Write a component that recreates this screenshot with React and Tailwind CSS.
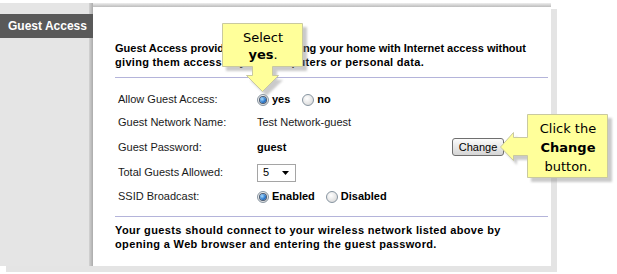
import React from 'react'

function Radio({ checked }) {
    return (
        <span className="flex h-[12px] w-[12px] shrink-0 items-center justify-center rounded-full border border-[#8795a1] bg-[radial-gradient(circle_at_40%_35%,#ffffff,#d2d2d2)]">
            {checked && (
                <span className="h-[6px] w-[6px] rounded-full bg-[radial-gradient(circle_at_35%_35%,#a8dcff,#1d6cc4_65%,#0b3a7c)] ring-1 ring-[#4a5a70]" />
            )}
        </span>
    )
}

function Row({ label, height, children }) {
    return (
        <div className={`flex items-center pl-[3px] ${height}`}>
            <span className="w-[139px] shrink-0">{label}</span>
            {children}
        </div>
    )
}

export default function App() {
    return (
        <div className="relative h-[274px] w-[617px] overflow-hidden bg-white font-['Liberation_Sans',Arial,sans-serif] text-[11px] text-[#1a1a1a]">
            <div className="mt-[3px] flex h-[263px] w-[551px] shadow-[6px_6px_0_0_#e4e4e4]">
                {/* sidebar */}
                <div className="w-[93px] shrink-0 bg-[linear-gradient(to_right,#e5e5e5_89px,#d3d3d3_89px,#ababab_93px)] pt-[11px]">
                    <div className="flex h-[24px] items-center bg-[#595959] pl-[8px] text-[12px] font-bold text-white">
                        Guest Access
                    </div>
                </div>

                {/* content */}
                <div className="flex flex-1 flex-col bg-white">
                    <div className="h-[4px] bg-gradient-to-b from-[#eeeeee] to-[#bcbcbc]" />
                    <div className="pl-[22px] pt-[34px]">
                        <p className="whitespace-nowrap text-[11px] font-bold leading-[14px] text-black">
                            <span className="block">Guest Access provides guests visiting your home with Internet access without</span>
                            <span className="block tracking-[0.3px]">giving them access to your computers or personal data.</span>
                        </p>
                        <div className="mr-[3px] mt-[8px] h-px bg-[#b4b4da]" />

                        <div className="pr-[47px] pt-[10px]">
                            <Row label="Allow Guest Access:" height="h-[23px]">
                                <span className="flex items-center">
                                    <Radio checked />
                                    <span className="ml-[3px] font-bold text-black">yes</span>
                                    <span className="ml-[12px]">
                                        <Radio />
                                    </span>
                                    <span className="ml-[3px] font-bold text-black">no</span>
                                </span>
                            </Row>
                            <Row label="Guest Network Name:" height="h-[23px]">
                                <span>Test Network-guest</span>
                            </Row>
                            <Row label="Guest Password:" height="h-[26px]">
                                <span className="font-bold text-black">guest</span>
                                <button className="ml-auto h-[18px] w-[52px] rounded-[3px] border border-[#6f6f6f] bg-gradient-to-b from-[#fbfbfb] to-[#d5d5d5] text-[11px] text-black">
                                    Change
                                </button>
                            </Row>
                            <Row label="Total Guests Allowed:" height="h-[25px]">
                                <span className="flex h-[18px] w-[39px] items-center justify-between border border-[#a5a5a5] bg-white pl-[5px] pr-[6px] text-black">
                                    5
                                    <svg width="7" height="4" viewBox="0 0 7 4">
                                        <polygon points="0,0 7,0 3.5,4" fill="#000" />
                                    </svg>
                                </span>
                            </Row>
                            <Row label="SSID Broadcast:" height="h-[23px]">
                                <span className="flex items-center">
                                    <Radio checked />
                                    <span className="ml-[3px] font-bold text-black">Enabled</span>
                                    <span className="ml-[11px]">
                                        <Radio />
                                    </span>
                                    <span className="ml-[3px] font-bold text-black">Disabled</span>
                                </span>
                            </Row>
                        </div>

                        <div className="mr-[3px] mt-[8px] h-px bg-[#b4b4da]" />
                        <p className="whitespace-nowrap pt-[6px] text-[11px] font-bold leading-[14px] tracking-[0.36px] text-black">
                            <span className="block">Your guests should connect to your wireless network listed above by</span>
                            <span className="block">opening a Web browser and entering the guest password.</span>
                        </p>
                    </div>
                </div>
            </div>

            {/* callouts */}
            <svg className="pointer-events-none absolute left-0 top-0" width="617" height="274">
                <defs>
                    <filter id="soft" x="-10%" y="-10%" width="130%" height="130%">
                        <feGaussianBlur stdDeviation="1.3" />
                    </filter>
                </defs>
                <g transform="translate(4 4)" fill="#8c8c8c" opacity="0.45" filter="url(#soft)">
                    <polygon points="222,23 303,23 303,67 273,67 273,76 279,76 262.5,92 246,76 252,76 252,67 222,67" />
                    <polygon points="527,114 608,114 608,178 527,178 527,156 513,156 513,161 500,147 513,132 513,137 527,137" />
                </g>
                <g fill="#ffff9a" stroke="#c9c9a0" strokeWidth="1">
                    <polygon points="222.5,23.5 302.5,23.5 302.5,66.5 272.5,66.5 272.5,75.5 278.5,75.5 262.5,91.5 246.5,75.5 252.5,75.5 252.5,66.5 222.5,66.5" />
                    <polygon points="527.5,114.5 607.5,114.5 607.5,177.5 527.5,177.5 527.5,155.5 513.5,155.5 513.5,160.5 500.5,147 513.5,132.5 513.5,137.5 527.5,137.5" />
                </g>
            </svg>
            <div className="absolute left-[223px] top-[29px] w-[80px] text-center font-['DejaVu_Sans',Verdana,sans-serif] text-[13px] leading-[17px] text-black">
                Select
                <br />
                <span className="font-bold">yes</span>.
            </div>
            <div className="absolute left-[528px] top-[119px] w-[80px] text-center font-['DejaVu_Sans',Verdana,sans-serif] text-[13px] leading-[19px] text-black">
                Click the
                <br />
                <span className="font-bold">Change</span>
                <br />
                button.
            </div>
        </div>
    )
}
